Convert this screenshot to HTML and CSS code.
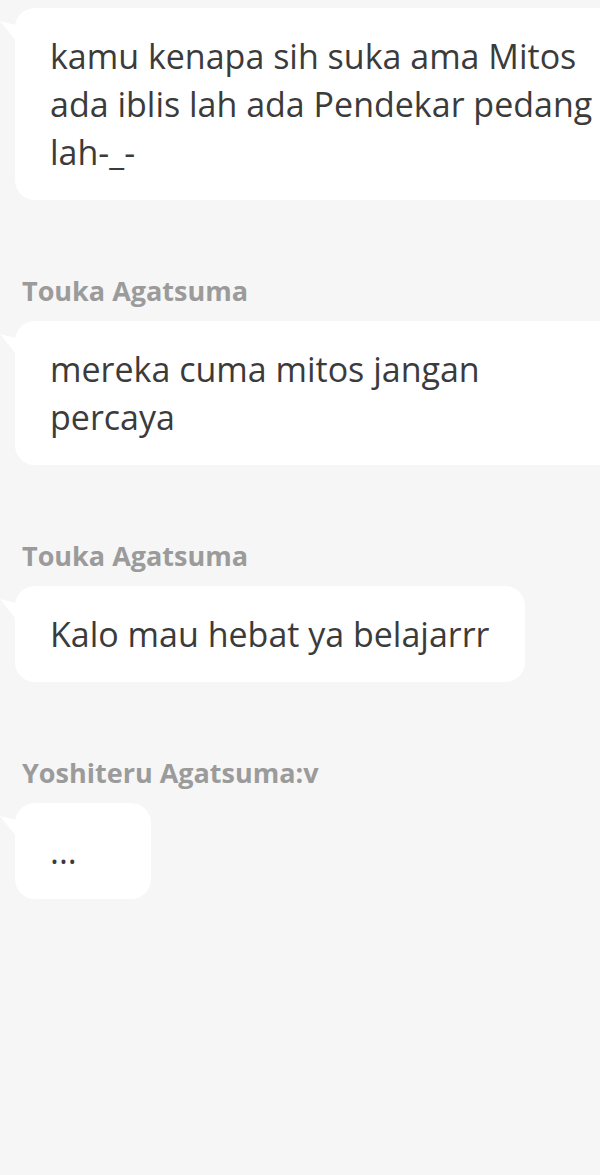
FILE: index.html
```html
<!DOCTYPE html>
<html lang="id">
<head>
<meta charset="utf-8">
<title>Chat</title>
<link rel="stylesheet" href="styles.css">
</head>
<body>
<main class="chat">
  <section class="msg msg-first">
    <div class="bubble wide">kamu kenapa sih suka ama Mitos ada iblis lah ada Pendekar pedang lah-_-</div>
  </section>
  <section class="msg">
    <div class="name">Touka Agatsuma</div>
    <div class="bubble wide">mereka cuma mitos jangan percaya</div>
  </section>
  <section class="msg">
    <div class="name">Touka Agatsuma</div>
    <div class="bubble">Kalo mau hebat ya belajarrr</div>
  </section>
  <section class="msg">
    <div class="name">Yoshiteru Agatsuma:v</div>
    <div class="bubble small">...</div>
  </section>
</main>
</body>
</html>
```
FILE: styles.css
```css
html, body {
  margin: 0;
  padding: 0;
}
body {
  background: #f6f6f6;
  width: 600px;
  height: 1175px;
  overflow: hidden;
  font-family: "Open Sans", "Lato", sans-serif;
  color: #3b3b3b;
}
.chat {
  display: flex;
  flex-direction: column;
  gap: 75px;
  padding-top: 8px;
  overflow: hidden;
}
.msg {
  display: flex;
  flex-direction: column;
  align-items: flex-start;
  gap: 14px;
}
.name {
  margin-left: 22px;
  font-size: 27px;
  line-height: 32px;
  font-weight: 700;
  color: #9b9b9b;
}
.bubble {
  position: relative;
  margin-left: 15px;
  background: #ffffff;
  border-radius: 20px;
  padding: 24px 35px;
  font-size: 34px;
  line-height: 48px;
  max-width: 558px;
  min-width: 66px;
  flex-shrink: 0;
}
.bubble.wide {
  width: 558px;
}
.bubble::before {
  content: "";
  position: absolute;
  left: -15px;
  top: 13px;
  width: 16px;
  height: 20px;
  background: #ffffff;
  clip-path: polygon(0 0, 100% 20%, 100% 100%);
}
```
